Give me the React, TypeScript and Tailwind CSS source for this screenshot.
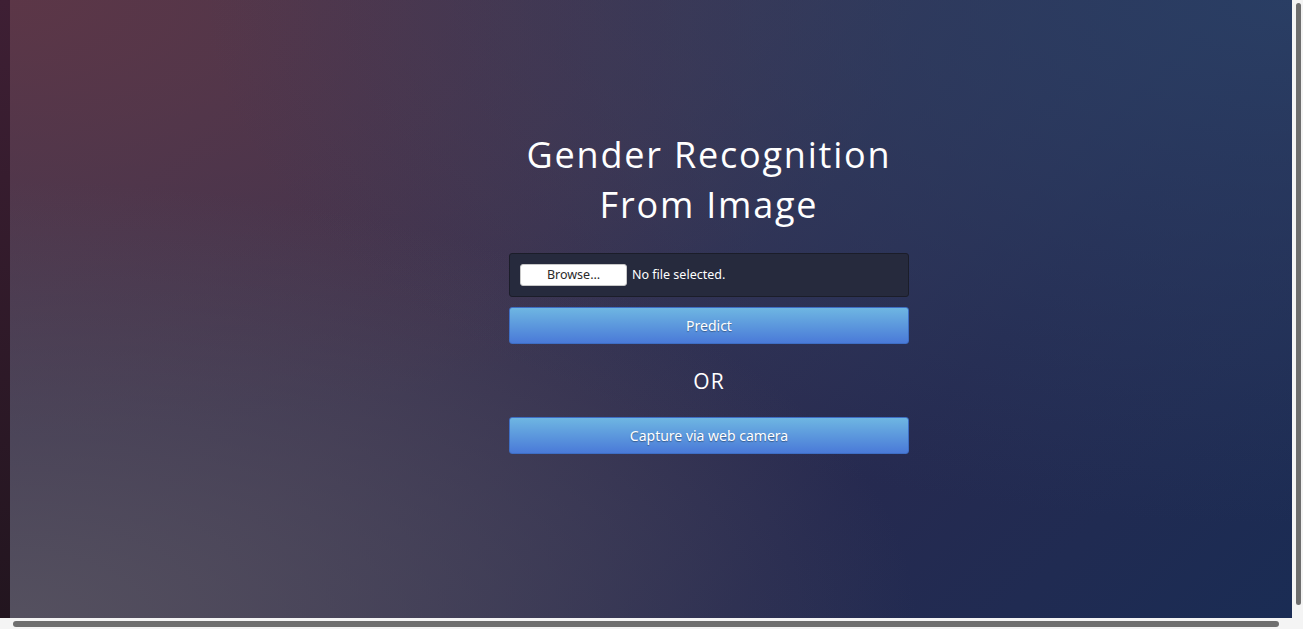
export default function App() {
  return (
    <div className="flex h-[629px] w-[1303px] flex-col overflow-hidden bg-[#f4f4f4] font-['Open_Sans',sans-serif]">
      <div className="flex h-[618px]">
        <div className="w-[10px] bg-[linear-gradient(to_bottom,#3e1f34,#22151f)]" />
        <main className="flex flex-1 flex-col items-center bg-[radial-gradient(ellipse_at_0%_100%,rgba(86,82,96,0.95)_0%,rgba(86,82,96,0)_50%),radial-gradient(ellipse_at_100%_0%,rgba(42,64,102,0.9)_0%,rgba(42,64,102,0)_60%),radial-gradient(ellipse_at_0%_0%,rgba(94,54,70,0.9)_0%,rgba(94,54,70,0)_50%),linear-gradient(135deg,#463850_0%,#3a3350_40%,#262a50_70%,#1a2c54_100%)] pl-[116px] pt-[130px]">
          <h1 className="text-center text-[36px] leading-[50px] tracking-[1.8px] text-white">
            Gender Recognition
            <br />
            From Image
          </h1>
          <div className="mt-[23px] flex w-[400px] flex-col font-['Noto_Sans',sans-serif]">
            <div className="flex h-[44px] items-center rounded-[3px] border border-[#1b1d29] bg-[#262a3d] pl-[10px]">
              <span className="flex h-[22px] w-[107px] items-center justify-center rounded-[3px] border border-[#c8c8c8] bg-white text-[12.5px] text-[#2a2a2a]">
                Browse…
              </span>
              <span className="ml-[5px] text-[12.5px] text-white">No file selected.</span>
            </div>
            <button className="mt-[10px] h-[37px] rounded-[3px] border border-[#3e6ec4] bg-[linear-gradient(to_bottom,#6eb6e2,#4a7ad8)] text-[14px] text-white [text-shadow:0_1px_1px_rgba(0,0,0,0.35)]">
              Predict
            </button>
            <div className="mt-[22px] text-center font-['Open_Sans',sans-serif] text-[21px] leading-[30px] tracking-[1px] text-white">OR</div>
            <button className="mt-[21px] h-[37px] rounded-[3px] border border-[#3e6ec4] bg-[linear-gradient(to_bottom,#6eb6e2,#4a7ad8)] text-[14px] text-white [text-shadow:0_1px_1px_rgba(0,0,0,0.35)]">
              Capture via web camera
            </button>
          </div>
        </main>
        <div className="flex w-[11px] justify-center pt-[3px] pb-[13px] pl-[1px]">
          <div className="w-[5px] rounded-full bg-[#6e6e6e]" />
        </div>
      </div>
      <div className="flex h-[11px] items-center pl-[13px]">
        <div className="h-[6px] w-[1266px] rounded-full bg-[#6e6e6e]" />
      </div>
    </div>
  );
}
